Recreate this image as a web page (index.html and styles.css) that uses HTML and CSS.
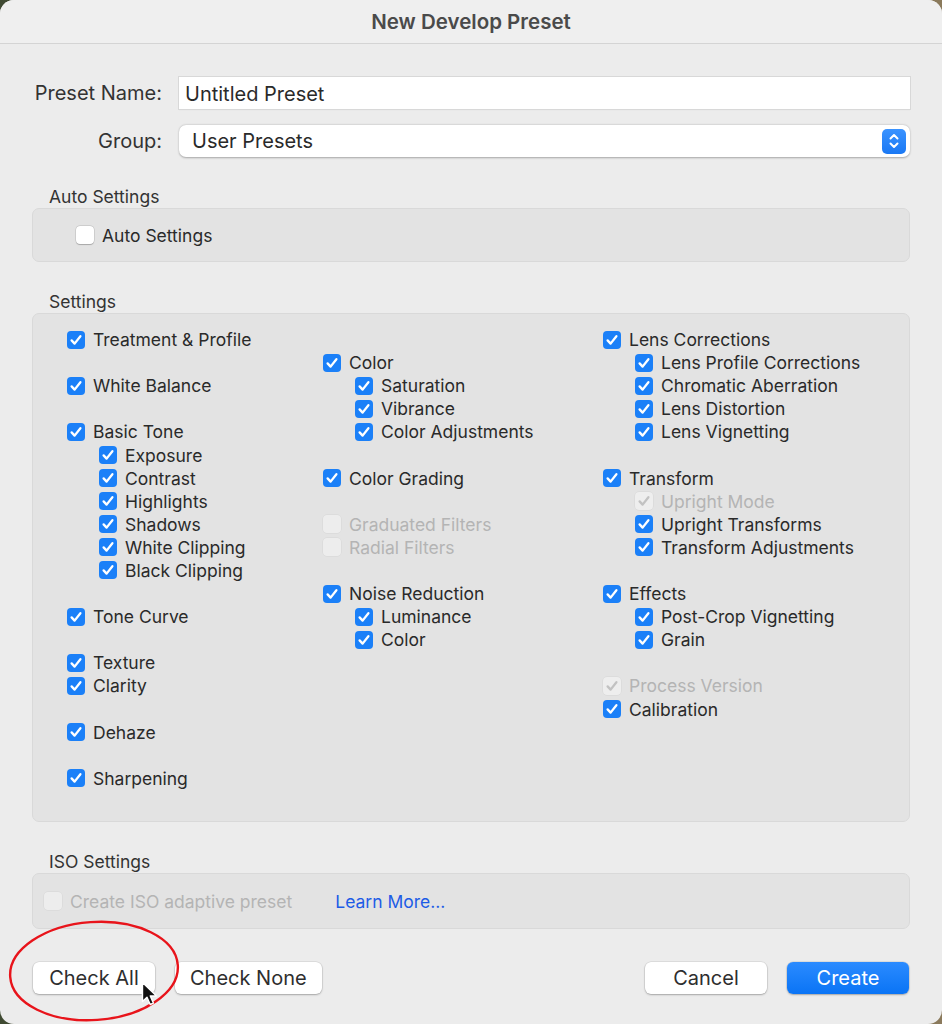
FILE: index.html
```html
<!DOCTYPE html>
<html lang="en">
<head>
    <meta charset="UTF-8">
    <title>New Develop Preset</title>
    <link rel="stylesheet" href="styles.css">
</head>
<body>
    <div class="dialog">
        <div class="titlebar">New Develop Preset</div>

        <div class="content">
            <!-- name + group -->
            <div class="field">
                <label class="field-label">Preset Name:</label>
                <div class="text-input">Untitled Preset</div>
            </div>
            <div class="field">
                <label class="field-label">Group:</label>
                <div class="select">
                    <span>User Presets</span>
                    <span class="stepper">
                        <svg width="12" height="18" viewBox="0 0 12 18"><path d="M2.5 6.5L6 3l3.5 3.5M2.5 11.5L6 15l3.5-3.5" fill="none" stroke="#fff" stroke-width="2" stroke-linecap="round" stroke-linejoin="round"/></svg>
                    </span>
                </div>
            </div>

            <!-- auto settings -->
            <div class="section">
                <div class="section-title">Auto Settings</div>
                <div class="box box-auto">
                    <div class="check"><span class="cb"></span>Auto Settings</div>
                </div>
            </div>

            <!-- settings -->
            <div class="section">
                <div class="section-title">Settings</div>
                <div class="box box-settings">
                    <div class="col">
                        <div class="check on"><span class="cb"></span>Treatment &amp; Profile</div>
                        <div class="blank"></div>
                        <div class="check on"><span class="cb"></span>White Balance</div>
                        <div class="blank"></div>
                        <div class="check on"><span class="cb"></span>Basic Tone</div>
                        <div class="check on sub"><span class="cb"></span>Exposure</div>
                        <div class="check on sub"><span class="cb"></span>Contrast</div>
                        <div class="check on sub"><span class="cb"></span>Highlights</div>
                        <div class="check on sub"><span class="cb"></span>Shadows</div>
                        <div class="check on sub"><span class="cb"></span>White Clipping</div>
                        <div class="check on sub"><span class="cb"></span>Black Clipping</div>
                        <div class="blank"></div>
                        <div class="check on"><span class="cb"></span>Tone Curve</div>
                        <div class="blank"></div>
                        <div class="check on"><span class="cb"></span>Texture</div>
                        <div class="check on"><span class="cb"></span>Clarity</div>
                        <div class="blank"></div>
                        <div class="check on"><span class="cb"></span>Dehaze</div>
                        <div class="blank"></div>
                        <div class="check on"><span class="cb"></span>Sharpening</div>
                    </div>
                    <div class="col">
                        <div class="blank"></div>
                        <div class="check on"><span class="cb"></span>Color</div>
                        <div class="check on sub"><span class="cb"></span>Saturation</div>
                        <div class="check on sub"><span class="cb"></span>Vibrance</div>
                        <div class="check on sub"><span class="cb"></span>Color Adjustments</div>
                        <div class="blank"></div>
                        <div class="check on"><span class="cb"></span>Color Grading</div>
                        <div class="blank"></div>
                        <div class="check disabled"><span class="cb"></span>Graduated Filters</div>
                        <div class="check disabled"><span class="cb"></span>Radial Filters</div>
                        <div class="blank"></div>
                        <div class="check on"><span class="cb"></span>Noise Reduction</div>
                        <div class="check on sub"><span class="cb"></span>Luminance</div>
                        <div class="check on sub"><span class="cb"></span>Color</div>
                    </div>
                    <div class="col">
                        <div class="check on"><span class="cb"></span>Lens Corrections</div>
                        <div class="check on sub"><span class="cb"></span>Lens Profile Corrections</div>
                        <div class="check on sub"><span class="cb"></span>Chromatic Aberration</div>
                        <div class="check on sub"><span class="cb"></span>Lens Distortion</div>
                        <div class="check on sub"><span class="cb"></span>Lens Vignetting</div>
                        <div class="blank"></div>
                        <div class="check on"><span class="cb"></span>Transform</div>
                        <div class="check on disabled sub"><span class="cb"></span>Upright Mode</div>
                        <div class="check on sub"><span class="cb"></span>Upright Transforms</div>
                        <div class="check on sub"><span class="cb"></span>Transform Adjustments</div>
                        <div class="blank"></div>
                        <div class="check on"><span class="cb"></span>Effects</div>
                        <div class="check on sub"><span class="cb"></span>Post-Crop Vignetting</div>
                        <div class="check on sub"><span class="cb"></span>Grain</div>
                        <div class="blank"></div>
                        <div class="check on disabled"><span class="cb"></span>Process Version</div>
                        <div class="check on"><span class="cb"></span>Calibration</div>
                    </div>
                </div>
            </div>

            <!-- iso -->
            <div class="section">
                <div class="section-title">ISO Settings</div>
                <div class="box box-iso">
                    <div class="check disabled"><span class="cb"></span>Create ISO adaptive preset</div>
                    <a class="link" href="#">Learn More...</a>
                </div>
            </div>
        </div>

        <div class="footer">
            <div class="btn-group">
                <button class="btn">Check All</button>
                <button class="btn">Check None</button>
            </div>
            <div class="btn-group">
                <button class="btn">Cancel</button>
                <button class="btn primary">Create</button>
            </div>

            <!-- annotation over the screenshot -->
            <svg class="circle" width="180" height="110" viewBox="0 0 180 110">
                <ellipse cx="90" cy="55" rx="84" ry="49" transform="rotate(-4 90 55)" fill="none" stroke="#e8141b" stroke-width="2.4"/>
            </svg>
            <svg class="cursor" width="18" height="26" viewBox="0 0 18 26">
                <path d="M1.5 1.5v19l4.5-4.3 3.2 7.3 3.2-1.4-3.1-7.1h6.2z" fill="#111" stroke="#fff" stroke-width="1.4" stroke-linejoin="round"/>
            </svg>
        </div>
    </div>
</body>
</html>
```

FILE: styles.css
```css
body {
    margin: 0;
    background: linear-gradient(90deg, #3f4a32, #6a5a44 50%, #8b7a5c);
    font-family: Inter, "Noto Sans", sans-serif;
    color: #2a2a2a;
}
.dialog {
    position: relative;
    width: 942px;
    height: 1024px;
    background: #ececec;
    border-radius: 14px;
    overflow: hidden;
}
.titlebar {
    height: 43px;
    line-height: 43px;
    text-align: center;
    font-size: 20.5px;
    font-weight: 600;
    color: #4a4a4a;
    background: #efefef;
    border-bottom: 1px solid #d4d4d4;
}
.content {
    padding: 33px 32px 0 32px;
}
.field {
    display: flex;
    align-items: center;
    margin-bottom: 16px;
}
.field-label {
    width: 130px;
    text-align: right;
    font-size: 20px;
    margin-right: 17px;
    color: #333;
}
.text-input {
    flex: 1;
    height: 32px;
    line-height: 35px;
    padding: 0 6px;
    background: #fff;
    font-size: 20px;
    box-shadow: 0 0 0 1px #d8d8d8, 0 1px 1px rgba(0, 0, 0, 0.08);
}
.select {
    flex: 1;
    height: 32px;
    display: flex;
    align-items: center;
    justify-content: space-between;
    padding: 0 4px 0 13px;
    background: #fff;
    border-radius: 7px;
    font-size: 20px;
    box-shadow: 0 0.5px 2px rgba(0, 0, 0, 0.3);
}
.stepper {
    width: 24px;
    height: 25px;
    border-radius: 5px;
    background: linear-gradient(#3a93ff, #1a78f4);
    display: flex;
    align-items: center;
    justify-content: center;
}
.section {
    margin-top: 30px;
}
.section-title {
    font-size: 17.5px;
    line-height: 20px;
    padding-left: 17px;
    margin-bottom: 1px;
    color: #333;
}
.box {
    background: #e3e3e3;
    border: 1px solid #d9d9d9;
    border-radius: 7px;
}
.box-auto {
    height: 52px;
    display: flex;
    align-items: center;
    padding-left: 43px;
}
.box-settings {
    display: grid;
    grid-template-columns: 256px 280px 1fr;
    padding: 14px 0 0 34px;
    height: 493px;
}
.box-iso {
    height: 54px;
    display: flex;
    align-items: center;
    padding-left: 11px;
}
.col {
    display: flex;
    flex-direction: column;
}
.check, .blank {
    height: 23.1px;
}
.check {
    display: flex;
    align-items: center;
    font-size: 17.5px;
    color: #2a2a2a;
    white-space: nowrap;
}
.check.sub {
    padding-left: 32px;
}
.cb {
    width: 18px;
    height: 18px;
    margin-right: 8px;
    border-radius: 4px;
    background: #fff;
    box-shadow: 0 0 0 0.5px rgba(0, 0, 0, 0.15), 0 0.5px 1px rgba(0, 0, 0, 0.2);
    box-sizing: border-box;
    flex-shrink: 0;
    background-repeat: no-repeat;
    background-position: center;
}
.check.on .cb {
    background-color: #1b80f8;
    background-image: url("data:image/svg+xml,%3Csvg xmlns='http://www.w3.org/2000/svg' width='18' height='18' viewBox='0 0 18 18'%3E%3Cpath d='M4.6 9.4l3 3.2 5.8-7.4' fill='none' stroke='%23fff' stroke-width='2.3' stroke-linecap='round' stroke-linejoin='round'/%3E%3C/svg%3E");
    box-shadow: none;
}
.check.disabled {
    color: #b4b4b4;
}
.check.disabled .cb {
    background-color: #ededed;
    box-shadow: 0 0 0 0.5px rgba(0, 0, 0, 0.06);
}
.check.on.disabled .cb {
    background-color: #eeeeee;
    background-image: url("data:image/svg+xml,%3Csvg xmlns='http://www.w3.org/2000/svg' width='18' height='18' viewBox='0 0 18 18'%3E%3Cpath d='M4.6 9.4l3 3.2 5.8-7.4' fill='none' stroke='%23c2c2c2' stroke-width='2.3' stroke-linecap='round' stroke-linejoin='round'/%3E%3C/svg%3E");
}
.link {
    margin-left: 43px;
    font-size: 17.5px;
    color: #1d5ce6;
    text-decoration: none;
}
.footer {
    position: relative;
    display: flex;
    justify-content: space-between;
    padding: 33px 33px 0 33px;
}
.btn-group {
    display: flex;
    gap: 20px;
}
.btn {
    min-width: 122px;
    height: 32px;
    padding: 0 15px;
    border: none;
    border-radius: 6px;
    background: #fff;
    font-family: Inter, "Noto Sans", sans-serif;
    font-size: 20px;
    color: #2e2e2e;
    box-shadow: 0 0 0 0.5px rgba(0, 0, 0, 0.12), 0 1px 2px rgba(0, 0, 0, 0.25);
}
.btn.primary {
    background: linear-gradient(#2b8bff, #0a74f5);
    color: #fff;
}
.circle {
    position: absolute;
    left: 4px;
    top: -13px;
}
.cursor {
    position: absolute;
    left: 141px;
    top: 52px;
}
```
